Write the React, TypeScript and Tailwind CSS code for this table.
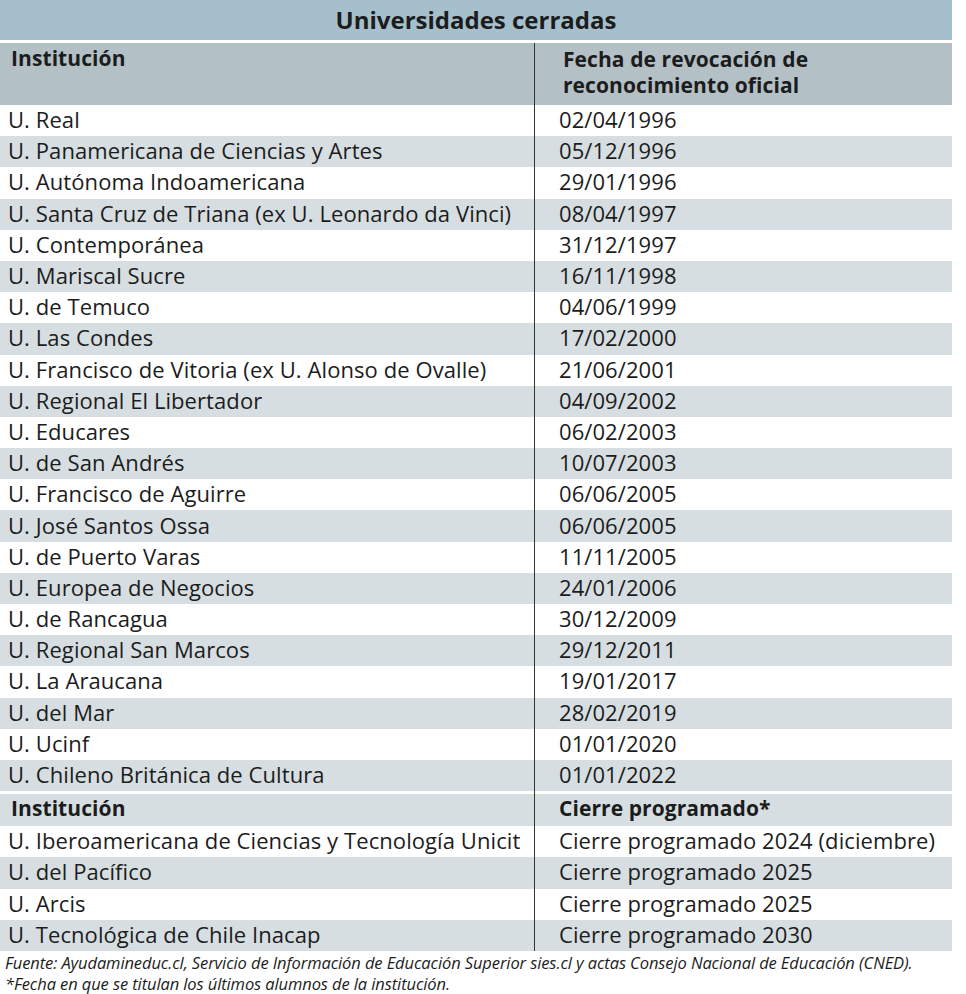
import React from 'react';

const closed: [string, string][] = [
  ['U. Real', '02/04/1996'],
  ['U. Panamericana de Ciencias y Artes', '05/12/1996'],
  ['U. Autónoma Indoamericana', '29/01/1996'],
  ['U. Santa Cruz de Triana (ex U. Leonardo da Vinci)', '08/04/1997'],
  ['U. Contemporánea', '31/12/1997'],
  ['U. Mariscal Sucre', '16/11/1998'],
  ['U. de Temuco', '04/06/1999'],
  ['U. Las Condes', '17/02/2000'],
  ['U. Francisco de Vitoria (ex U. Alonso de Ovalle)', '21/06/2001'],
  ['U. Regional El Libertador', '04/09/2002'],
  ['U. Educares', '06/02/2003'],
  ['U. de San Andrés', '10/07/2003'],
  ['U. Francisco de Aguirre', '06/06/2005'],
  ['U. José Santos Ossa', '06/06/2005'],
  ['U. de Puerto Varas', '11/11/2005'],
  ['U. Europea de Negocios', '24/01/2006'],
  ['U. de Rancagua', '30/12/2009'],
  ['U. Regional San Marcos', '29/12/2011'],
  ['U. La Araucana', '19/01/2017'],
  ['U. del Mar', '28/02/2019'],
  ['U. Ucinf', '01/01/2020'],
  ['U. Chileno Británica de Cultura', '01/01/2022'],
];

const scheduled: [string, string][] = [
  ['U. Iberoamericana de Ciencias y Tecnología Unicit', 'Cierre programado 2024 (diciembre)'],
  ['U. del Pacífico', 'Cierre programado 2025'],
  ['U. Arcis', 'Cierre programado 2025'],
  ['U. Tecnológica de Chile Inacap', 'Cierre programado 2030'],
];

const Row = ({ name, date, shaded }: { name: string; date: string; shaded: boolean }) => (
  <div className={`grid grid-cols-[534px_1fr] h-[31.2px] ${shaded ? 'bg-[#d6dee1]' : 'bg-white'}`}>
    <div className="pl-2 pb-[3px] flex items-center whitespace-nowrap">{name}</div>
    <div className="pl-6 pb-[3px] flex items-center border-l border-[#333] whitespace-nowrap">{date}</div>
  </div>
);

const App = () => {
  return (
    <div className="w-[966px] h-[994px] bg-white text-[#1c1c1c] font-['Open_Sans',sans-serif]">
      <div className="w-[952px]">
        <div className="h-[40px] bg-[#a5bfcc] flex items-center justify-center text-[24px] font-bold">
          Universidades cerradas
        </div>
        <div className="h-[3px]" />
        <div className="text-[22px] leading-none tracking-[0.08px]">
          <div className="grid grid-cols-[534px_1fr] h-[62px] bg-[#b3c1c7] font-bold text-[21px]">
            <div className="pl-[11px] pt-[5px]">Institución</div>
            <div className="border-l border-[#333] pl-[28px] pt-[3px] leading-[26px]">
              Fecha de revocación de
              <br />
              reconocimiento oficial
            </div>
          </div>
          {closed.map(([n, d], i) => (
            <Row key={n} name={n} date={d} shaded={i % 2 === 1} />
          ))}
          <div className="grid grid-cols-[534px_1fr] h-[3px]">
            <div />
            <div className="border-l border-[#333]" />
          </div>
          <div className="grid grid-cols-[534px_1fr] h-[32px] bg-[#d6dee1] font-bold text-[21px]">
            <div className="pl-[11px] pb-[3px] flex items-center">Institución</div>
            <div className="pl-6 pb-[3px] flex items-center border-l border-[#333]">Cierre programado*</div>
          </div>
          {scheduled.map(([n, d], i) => (
            <Row key={n} name={n} date={d} shaded={i % 2 === 1} />
          ))}
        </div>
        <div className="pl-[5px] pt-[1px] italic text-[16.5px] leading-[21px] tracking-[-0.1px] whitespace-nowrap">
          <p>
            Fuente: Ayudamineduc.cl, Servicio de Información de Educación Superior sies.cl y actas Consejo Nacional de
            Educación (CNED).
          </p>
          <p>*Fecha en que se titulan los últimos alumnos de la institución.</p>
        </div>
      </div>
    </div>
  );
};

export default App;
